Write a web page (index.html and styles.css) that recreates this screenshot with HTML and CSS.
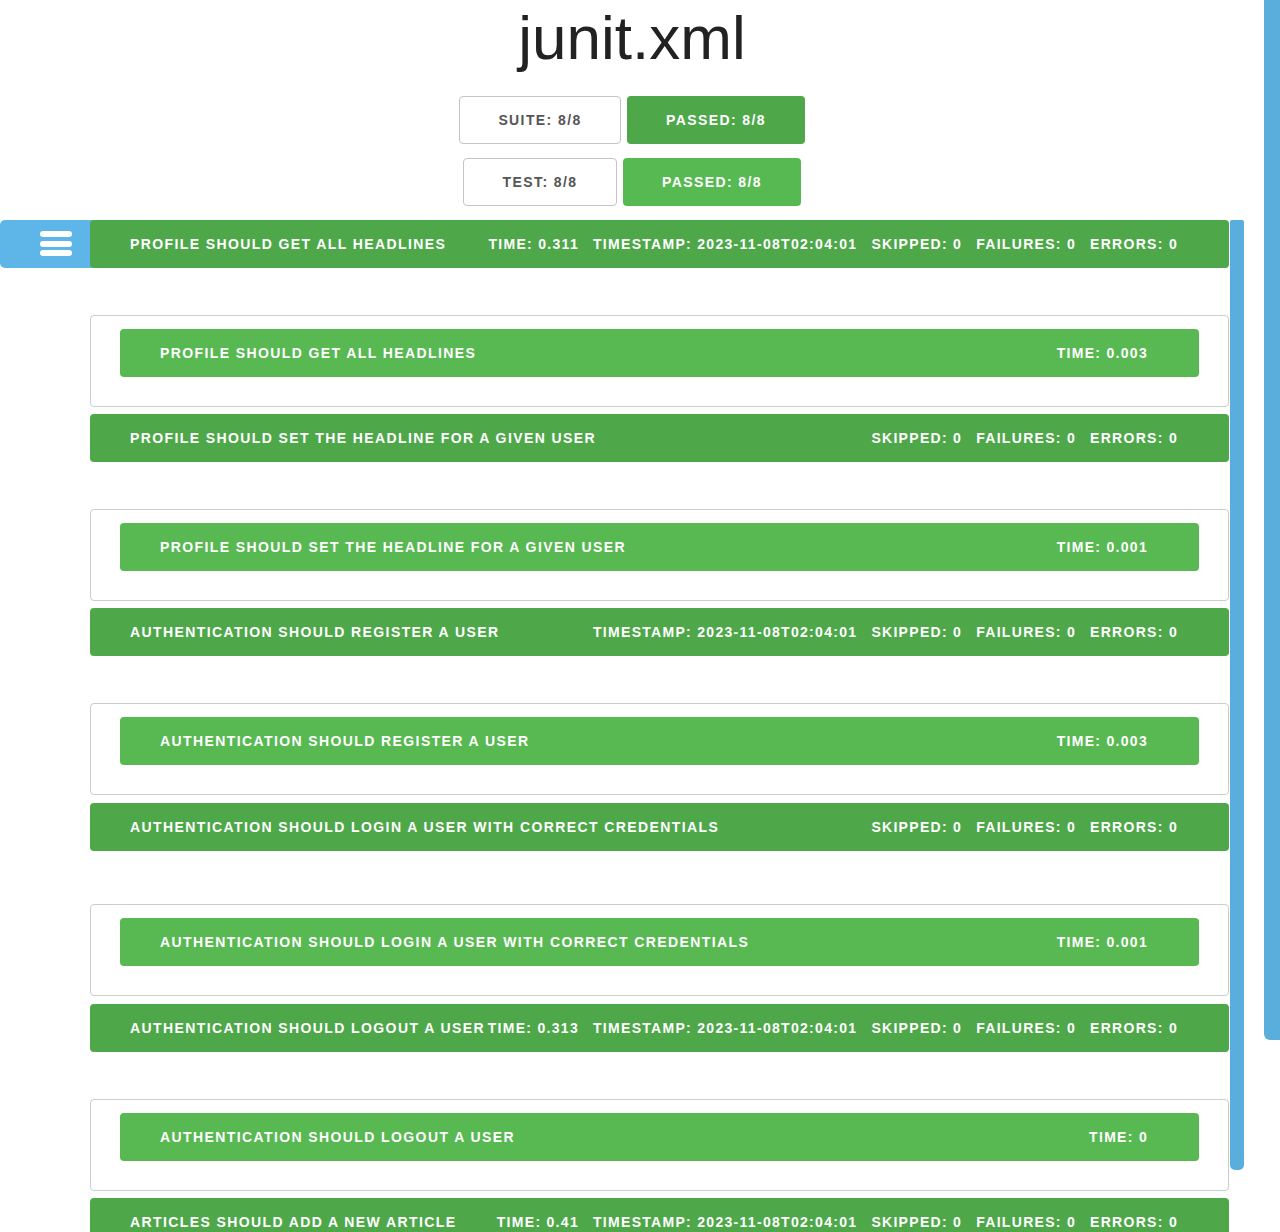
FILE: index.html
```html
<!DOCTYPE html>
<html lang="en">
<head>
<meta charset="utf-8">
<title>junit.xml</title>
<link rel="stylesheet" href="styles.css">
</head>
<body>
<div class="page">
  <header class="header">
    <h1 class="title">junit.xml</h1>
    <div class="summary-row">
      <div class="pill pill-outline pill-suite">SUITE: 8/8</div>
      <div class="pill pill-dark">PASSED: 8/8</div>
    </div>
    <div class="summary-row">
      <div class="pill pill-outline pill-test">TEST: 8/8</div>
      <div class="pill pill-light">PASSED: 8/8</div>
    </div>
  </header>

  <main class="suites">
    <div class="menu-tab">
      <svg class="menu-icon" width="32" height="26" viewBox="0 0 32 26">
        <rect x="0" y="0" width="32" height="6" rx="3" fill="#fff"/>
        <rect x="0" y="10" width="32" height="6" rx="3" fill="#fff"/>
        <rect x="0" y="19" width="32" height="6" rx="3" fill="#fff"/>
      </svg>
    </div>
    <div class="side-rail"></div>

    <section class="suite">
      <div class="bar bar-suite">
        <span class="bar-name">PROFILE SHOULD GET ALL HEADLINES</span>
        <span class="bar-stats">
          <span class="stat">TIME: 0.311</span>
          <span class="stat">TIMESTAMP: 2023-11-08T02:04:01</span>
          <span class="stat">SKIPPED: 0</span>
          <span class="stat">FAILURES: 0</span>
          <span class="stat">ERRORS: 0</span>
        </span>
      </div>
      <div class="cases">
        <div class="bar bar-case">
          <span class="bar-name">PROFILE SHOULD GET ALL HEADLINES</span>
          <span class="bar-stats"><span class="stat">TIME: 0.003</span></span>
        </div>
      </div>
    </section>

    <section class="suite">
      <div class="bar bar-suite">
        <span class="bar-name">PROFILE SHOULD SET THE HEADLINE FOR A GIVEN USER</span>
        <span class="bar-stats">
          <span class="stat">SKIPPED: 0</span>
          <span class="stat">FAILURES: 0</span>
          <span class="stat">ERRORS: 0</span>
        </span>
      </div>
      <div class="cases">
        <div class="bar bar-case">
          <span class="bar-name">PROFILE SHOULD SET THE HEADLINE FOR A GIVEN USER</span>
          <span class="bar-stats"><span class="stat">TIME: 0.001</span></span>
        </div>
      </div>
    </section>

    <section class="suite">
      <div class="bar bar-suite">
        <span class="bar-name">AUTHENTICATION SHOULD REGISTER A USER</span>
        <span class="bar-stats">
          <span class="stat">TIMESTAMP: 2023-11-08T02:04:01</span>
          <span class="stat">SKIPPED: 0</span>
          <span class="stat">FAILURES: 0</span>
          <span class="stat">ERRORS: 0</span>
        </span>
      </div>
      <div class="cases cases-loose">
        <div class="bar bar-case">
          <span class="bar-name">AUTHENTICATION SHOULD REGISTER A USER</span>
          <span class="bar-stats"><span class="stat">TIME: 0.003</span></span>
        </div>
      </div>
    </section>

    <section class="suite">
      <div class="bar bar-suite">
        <span class="bar-name">AUTHENTICATION SHOULD LOGIN A USER WITH CORRECT CREDENTIALS</span>
        <span class="bar-stats">
          <span class="stat">SKIPPED: 0</span>
          <span class="stat">FAILURES: 0</span>
          <span class="stat">ERRORS: 0</span>
        </span>
      </div>
      <div class="cases cases-tall">
        <div class="bar bar-case">
          <span class="bar-name">AUTHENTICATION SHOULD LOGIN A USER WITH CORRECT CREDENTIALS</span>
          <span class="bar-stats"><span class="stat">TIME: 0.001</span></span>
        </div>
      </div>
    </section>

    <section class="suite">
      <div class="bar bar-suite">
        <span class="bar-name">AUTHENTICATION SHOULD LOGOUT A USER</span>
        <span class="bar-stats">
          <span class="stat">TIME: 0.313</span>
          <span class="stat">TIMESTAMP: 2023-11-08T02:04:01</span>
          <span class="stat">SKIPPED: 0</span>
          <span class="stat">FAILURES: 0</span>
          <span class="stat">ERRORS: 0</span>
        </span>
      </div>
      <div class="cases">
        <div class="bar bar-case">
          <span class="bar-name">AUTHENTICATION SHOULD LOGOUT A USER</span>
          <span class="bar-stats"><span class="stat">TIME: 0</span></span>
        </div>
      </div>
    </section>

    <section class="suite">
      <div class="bar bar-suite">
        <span class="bar-name">ARTICLES SHOULD ADD A NEW ARTICLE</span>
        <span class="bar-stats">
          <span class="stat">TIME: 0.41</span>
          <span class="stat">TIMESTAMP: 2023-11-08T02:04:01</span>
          <span class="stat">SKIPPED: 0</span>
          <span class="stat">FAILURES: 0</span>
          <span class="stat">ERRORS: 0</span>
        </span>
      </div>
    </section>
  </main>
</div>
<div class="scroll-thumb"></div>
</body>
</html>
```

FILE: styles.css
```css
html, body {
  margin: 0;
  padding: 0;
}

body {
  background: #ffffff;
  font-family: "Liberation Sans", Helvetica, Arial, sans-serif;
  color: #222222;
  overflow: hidden;
  position: relative;
}

.page {
  width: 1264px;
}

.header {
  display: flex;
  flex-direction: column;
  align-items: center;
  padding-top: 2px;
}

.title {
  margin: 0 0 23px 0;
  font-size: 62px;
  font-weight: 400;
  line-height: 71px;
  color: #222222;
  letter-spacing: 0;
}

.summary-row {
  display: flex;
  gap: 6px;
  margin-bottom: 14px;
}

.pill {
  height: 48px;
  box-sizing: border-box;
  display: flex;
  align-items: center;
  justify-content: center;
  font-size: 14px;
  font-weight: 700;
  letter-spacing: 1.4px;
  border-radius: 4px;
}

.pill-outline {
  border: 1px solid #c4c4c4;
  color: #555555;
  background: #ffffff;
}

.pill-suite {
  width: 162px;
}

.pill-test {
  width: 154px;
}

.pill-dark {
  width: 178px;
  background: #4ea84a;
  color: #ffffff;
}

.pill-light {
  width: 178px;
  background: #57b952;
  color: #ffffff;
}

.suites {
  position: relative;
  padding: 0 35px 0 90px;
}

.menu-tab {
  position: absolute;
  left: 0;
  top: 0;
  width: 96px;
  height: 48px;
  background: #5db6e7;
  border-radius: 5px 0 0 5px;
  display: flex;
  align-items: center;
  padding-left: 40px;
  box-sizing: border-box;
}

.menu-icon {
  display: block;
}

.side-rail {
  position: absolute;
  left: 1230px;
  top: 0;
  width: 14px;
  height: 950px;
  background: #5aaedd;
  border-radius: 2px 2px 5px 5px;
}

.suite {
  display: flex;
  flex-direction: column;
}

.bar {
  position: relative;
  height: 48px;
  display: flex;
  align-items: center;
  border-radius: 4px;
  color: #ffffff;
  font-size: 14px;
  font-weight: 700;
  letter-spacing: 1.4px;
  white-space: nowrap;
  padding: 0 37px 0 40px;
  box-sizing: border-box;
}

.bar-suite {
  background: #4ea84a;
}

.bar-case {
  background: #58b952;
}

.bar-name {
  flex: 1 1 0;
  min-width: 0;
}

.bar-stats {
  display: flex;
  flex: 0 0 auto;
  letter-spacing: 1.3px;
}

.stat {
  margin-right: 14px;
}

.cases {
  margin: 47px 0 7px 0;
  border: 1px solid #cccccc;
  border-radius: 4px;
  padding: 13px 29px 29px 29px;
}

.cases-loose {
  margin-bottom: 8px;
}

.cases-tall {
  margin-top: 53px;
  margin-bottom: 8px;
}

.scroll-thumb {
  position: absolute;
  left: 1264px;
  top: 0;
  width: 16px;
  height: 1040px;
  background: #5aaedc;
  border-radius: 0 0 0 6px;
}
```
